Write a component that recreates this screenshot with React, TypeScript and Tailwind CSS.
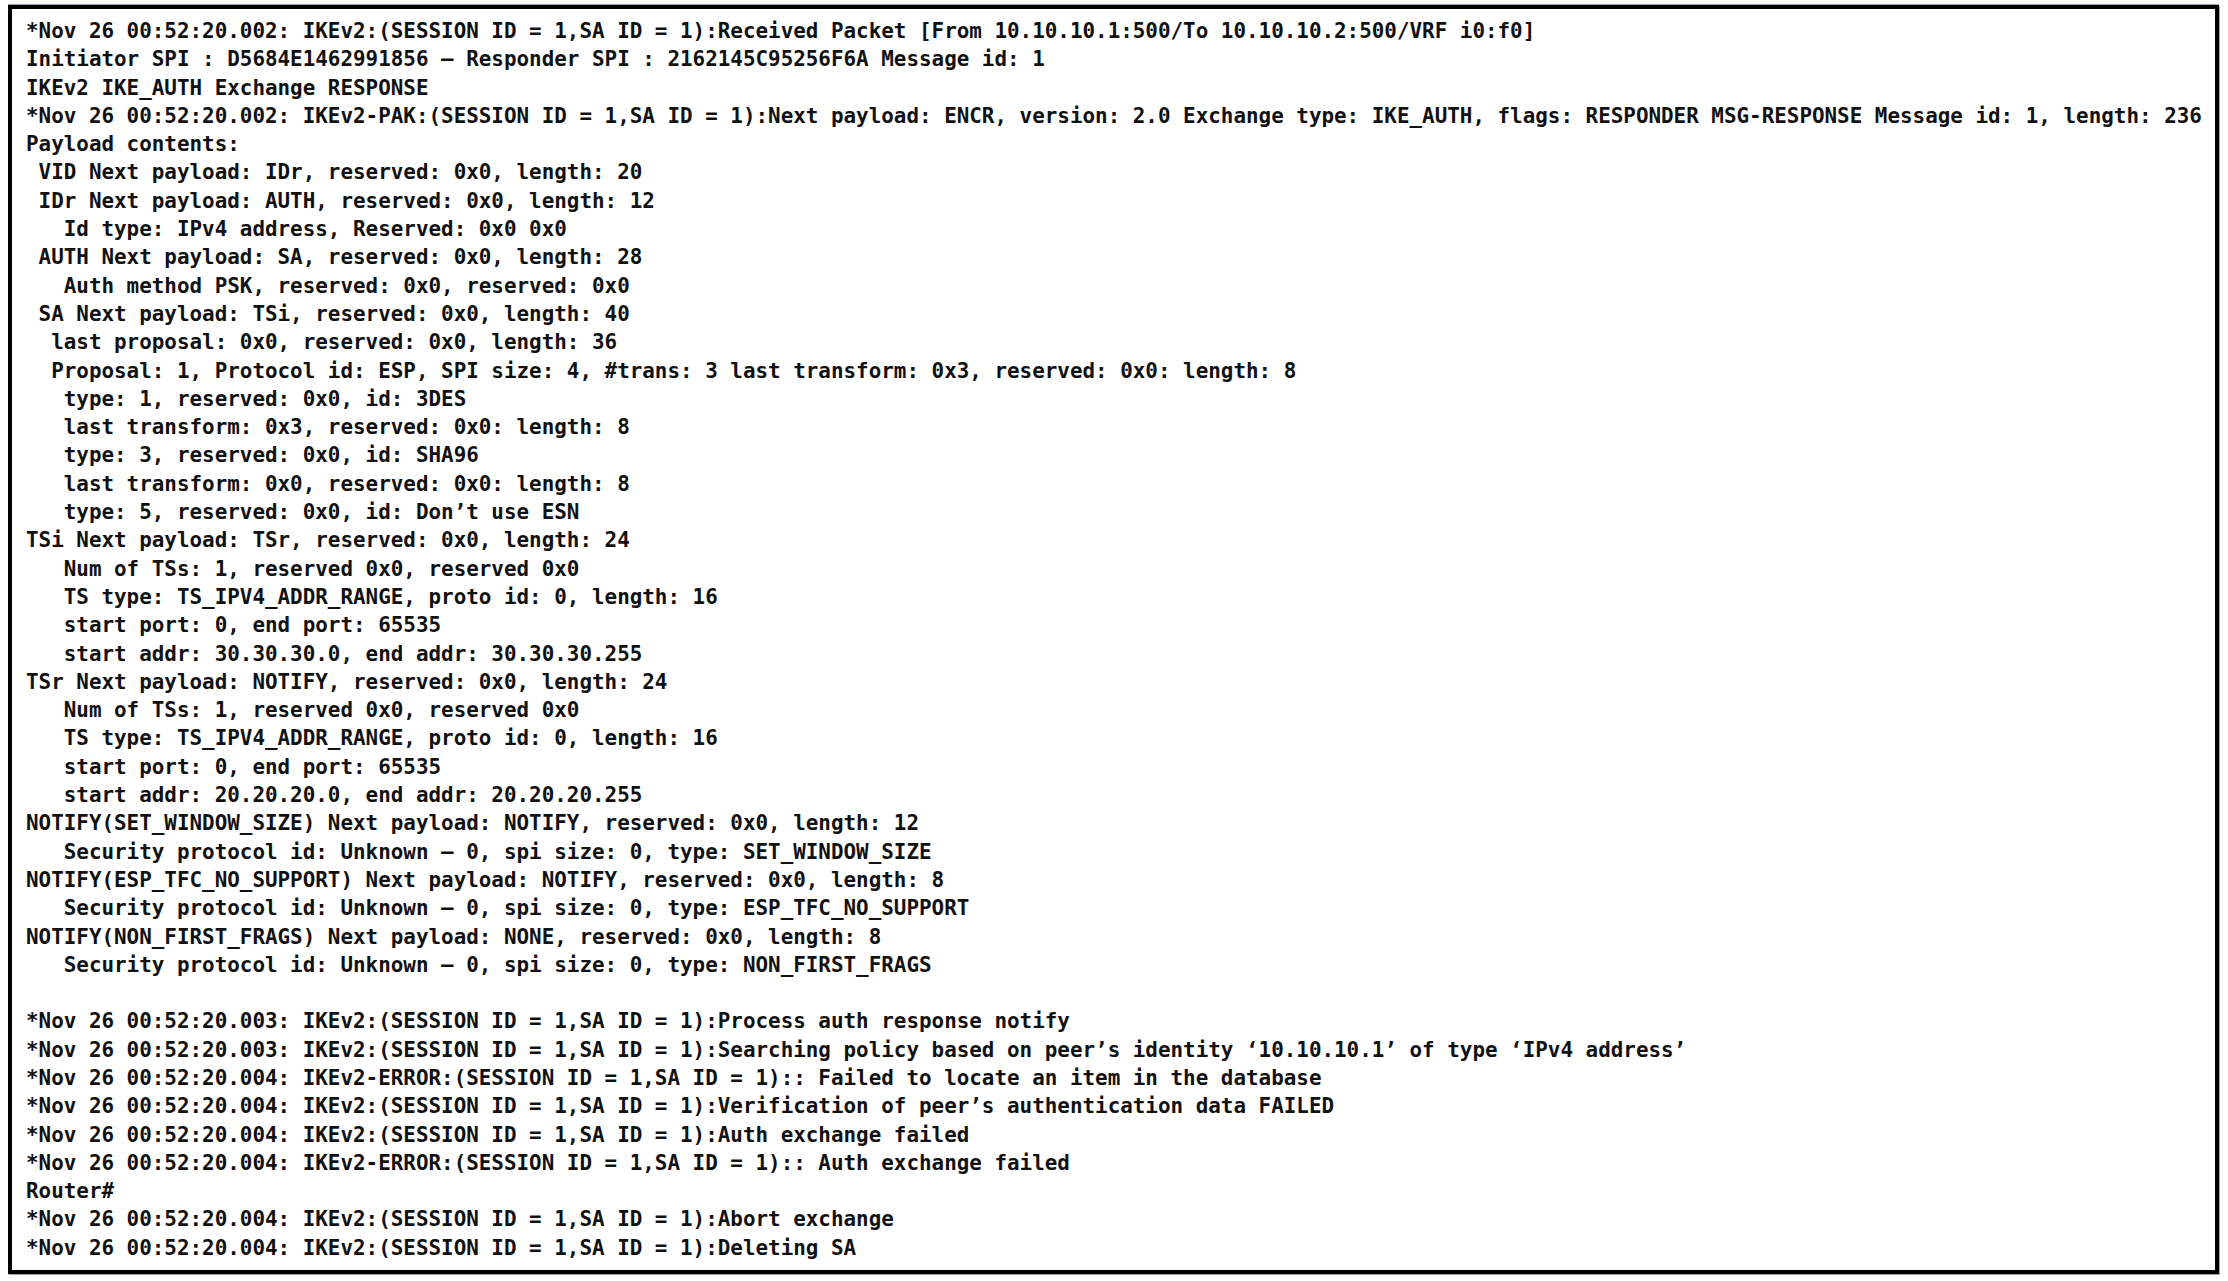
import React from "react";

const lines: string[] = [
  "*Nov 26 00:52:20.002: IKEv2:(SESSION ID = 1,SA ID = 1):Received Packet [From 10.10.10.1:500/To 10.10.10.2:500/VRF i0:f0]",
  "Initiator SPI : D5684E1462991856 \u2013 Responder SPI : 2162145C95256F6A Message id: 1",
  "IKEv2 IKE_AUTH Exchange RESPONSE",
  "*Nov 26 00:52:20.002: IKEv2-PAK:(SESSION ID = 1,SA ID = 1):Next payload: ENCR, version: 2.0 Exchange type: IKE_AUTH, flags: RESPONDER MSG-RESPONSE Message id: 1, length: 236",
  "Payload contents:",
  " VID Next payload: IDr, reserved: 0x0, length: 20",
  " IDr Next payload: AUTH, reserved: 0x0, length: 12",
  "   Id type: IPv4 address, Reserved: 0x0 0x0",
  " AUTH Next payload: SA, reserved: 0x0, length: 28",
  "   Auth method PSK, reserved: 0x0, reserved: 0x0",
  " SA Next payload: TSi, reserved: 0x0, length: 40",
  "  last proposal: 0x0, reserved: 0x0, length: 36",
  "  Proposal: 1, Protocol id: ESP, SPI size: 4, #trans: 3 last transform: 0x3, reserved: 0x0: length: 8",
  "   type: 1, reserved: 0x0, id: 3DES",
  "   last transform: 0x3, reserved: 0x0: length: 8",
  "   type: 3, reserved: 0x0, id: SHA96",
  "   last transform: 0x0, reserved: 0x0: length: 8",
  "   type: 5, reserved: 0x0, id: Don\u2019t use ESN",
  "TSi Next payload: TSr, reserved: 0x0, length: 24",
  "   Num of TSs: 1, reserved 0x0, reserved 0x0",
  "   TS type: TS_IPV4_ADDR_RANGE, proto id: 0, length: 16",
  "   start port: 0, end port: 65535",
  "   start addr: 30.30.30.0, end addr: 30.30.30.255",
  "TSr Next payload: NOTIFY, reserved: 0x0, length: 24",
  "   Num of TSs: 1, reserved 0x0, reserved 0x0",
  "   TS type: TS_IPV4_ADDR_RANGE, proto id: 0, length: 16",
  "   start port: 0, end port: 65535",
  "   start addr: 20.20.20.0, end addr: 20.20.20.255",
  "NOTIFY(SET_WINDOW_SIZE) Next payload: NOTIFY, reserved: 0x0, length: 12",
  "   Security protocol id: Unknown \u2013 0, spi size: 0, type: SET_WINDOW_SIZE",
  "NOTIFY(ESP_TFC_NO_SUPPORT) Next payload: NOTIFY, reserved: 0x0, length: 8",
  "   Security protocol id: Unknown \u2013 0, spi size: 0, type: ESP_TFC_NO_SUPPORT",
  "NOTIFY(NON_FIRST_FRAGS) Next payload: NONE, reserved: 0x0, length: 8",
  "   Security protocol id: Unknown \u2013 0, spi size: 0, type: NON_FIRST_FRAGS",
  "",
  "*Nov 26 00:52:20.003: IKEv2:(SESSION ID = 1,SA ID = 1):Process auth response notify",
  "*Nov 26 00:52:20.003: IKEv2:(SESSION ID = 1,SA ID = 1):Searching policy based on peer\u2019s identity \u201810.10.10.1\u2019 of type \u2018IPv4 address\u2019",
  "*Nov 26 00:52:20.004: IKEv2-ERROR:(SESSION ID = 1,SA ID = 1):: Failed to locate an item in the database",
  "*Nov 26 00:52:20.004: IKEv2:(SESSION ID = 1,SA ID = 1):Verification of peer\u2019s authentication data FAILED",
  "*Nov 26 00:52:20.004: IKEv2:(SESSION ID = 1,SA ID = 1):Auth exchange failed",
  "*Nov 26 00:52:20.004: IKEv2-ERROR:(SESSION ID = 1,SA ID = 1):: Auth exchange failed",
  "Router#",
  "*Nov 26 00:52:20.004: IKEv2:(SESSION ID = 1,SA ID = 1):Abort exchange",
  "*Nov 26 00:52:20.004: IKEv2:(SESSION ID = 1,SA ID = 1):Deleting SA",
];

export default function App() {
  return (
    <div className="w-[2228px] h-[1281px] bg-white pl-[8px] pt-[5px]">
      <div className="w-[2211px] h-[1269px] border-4 border-black shadow-[0_-1px_0_#9ca3af,1px_1px_0_#9ca3af] bg-white pl-[14px] pt-[8px]">
        <pre className="font-['DejaVu_Sans_Mono','Liberation_Mono',monospace] font-bold text-[20.9px] leading-[28.3px] text-[#111]">
          {lines.map((l, i) => (
            <div key={i} className="h-[28.3px] whitespace-pre">
              {l}
            </div>
          ))}
        </pre>
      </div>
    </div>
  );
}
